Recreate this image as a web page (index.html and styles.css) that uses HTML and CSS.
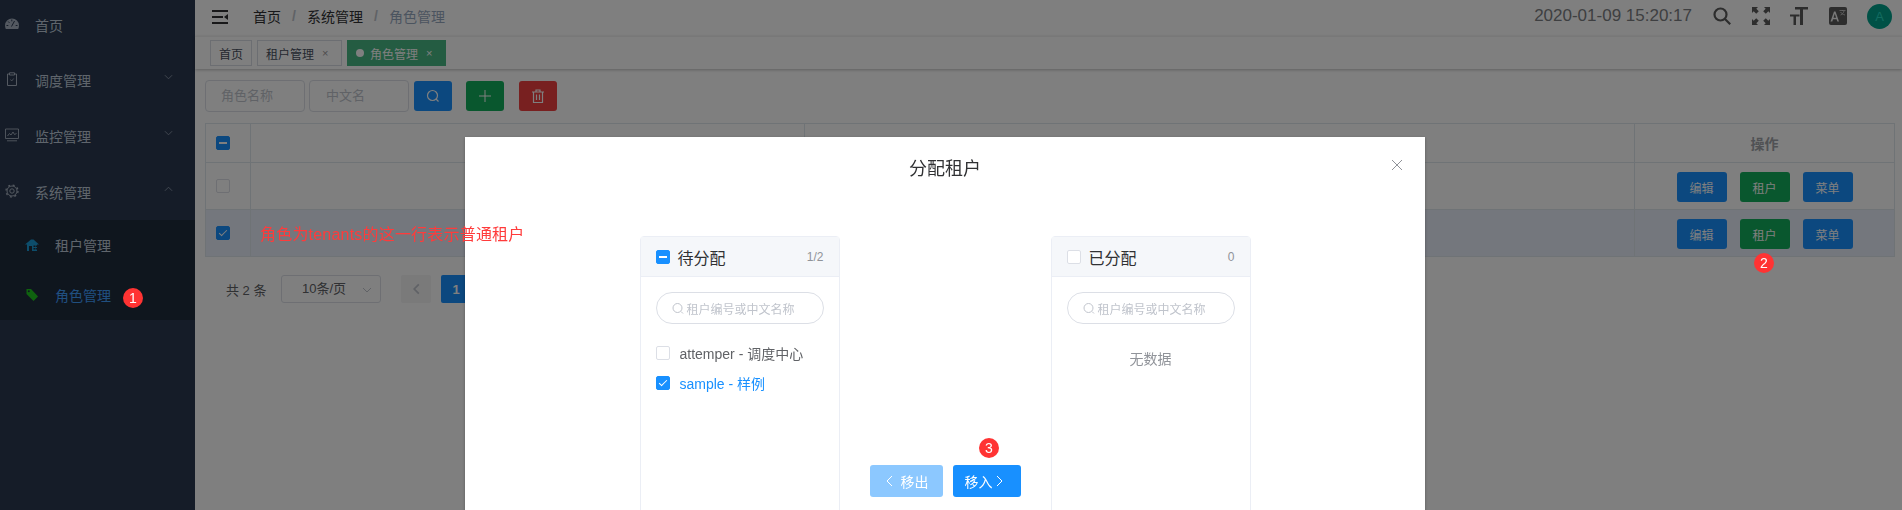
FILE: index.html
```html
<!DOCTYPE html>
<html lang="en">
<head>
  <meta charset="UTF-8">
  <title>角色管理</title>
  <link rel="stylesheet" href="styles.css">
</head>
<body>
  <div class="app">
    <!-- Sidebar -->
    <aside class="sidebar">
      <div class="menu-item">
        <svg class="menu-icon" viewBox="0 0 14 14"><path d="M7 1.500A7 7 0 0 0 0 8.500c0 1.300.3 2.400.8 3.500h12.400c.5-1.100.8-2.200.8-3.500a7 7 0 0 0-7-7z" fill="#a8b3c2"/><path d="M6.500 9.500 9.500 4M3.200 4.500l1.200 1.300M1.500 8.500h1.800M10.700 8.500h1.800M6.800 2.500v1.800" stroke="#2a3850" stroke-width="1" fill="none"/></svg>
        <span>首页</span>
      </div>
      <div class="menu-item">
        <svg class="menu-icon" viewBox="0 0 14 14" fill="none" stroke="#a8b3c2"><path d="M4.500 2h-2v11.500h9V2h-2"/><path d="M4.500 .8h5V3h-5z"/><path d="m5.500 7.500 1.200 1.500 2-2.500" stroke-width=".8"/></svg>
        <span>调度管理</span>
        <svg class="chevron" viewBox="0 0 10 6"><path d="m1 1 4 4 4-4"/></svg>
      </div>
      <div class="menu-item">
        <svg class="menu-icon" viewBox="0 0 14 14" fill="none" stroke="#a8b3c2" stroke-width=".9"><path d="M.5 1h13v9.500H.5zM2 12.800h10"/><path d="m2.500 8 2-2.500 1.500 1.500 2-3 1.500 2.500 2-1"/></svg>
        <span>监控管理</span>
        <svg class="chevron" viewBox="0 0 10 6"><path d="m1 1 4 4 4-4"/></svg>
      </div>
      <div class="menu-item">
        <svg class="menu-icon" viewBox="0 0 14 14" fill="none" stroke="#a8b3c2"><circle cx="7" cy="7" r="5"/><circle cx="7" cy="7" r="6" stroke-width="1.300" stroke-dasharray="2 2.710"/><circle cx="7" cy="7" r="2.200"/></svg>
        <span>系统管理</span>
        <svg class="chevron" viewBox="0 0 10 6"><path d="m1 5 4-4 4 4"/></svg>
      </div>
      <div class="submenu">
        <div class="submenu-item">
          <svg class="sub-icon" viewBox="0 0 14 14"><path d="M0 6.500 6 1.500h2.500l5.500 5H12v6.500H7V8H4v5H2V6.500z" fill="#1a9ad6"/><path d="M8.500 7.500h1.500v1.500H8.500zM10.500 7.500H12v1.500h-1.500zM8.500 10h1.500v1.500H8.500zM10.500 10H12v1.500h-1.500z" fill="#1f2d3d"/></svg>
          <span>租户管理</span>
        </div>
        <div class="submenu-item active">
          <svg class="sub-icon" viewBox="0 0 14 14"><path d="M1.500 1h4.500l7 7.500-4.500 4.500-7-7z" fill="#1fc71f"/><circle cx="3.800" cy="3.300" r="1" fill="#1f2d3d"/></svg>
          <span>角色管理</span>
        </div>
      </div>
    </aside>

    <section class="main">
      <!-- Top bar -->
      <header class="navbar">
        <svg class="hamburger" viewBox="0 0 16 14"><path d="M0 0h16v2H0zM0 6h11v2H0zM0 12h16v2H0z"/><path d="M16 4v6l-4-3z"/></svg>
        <div class="breadcrumb">
          <span>首页</span><i>/</i><span>系统管理</span><i>/</i><span class="current">角色管理</span>
        </div>
        <div class="navbar-right">
          <span class="clock">2020-01-09 15:20:17</span>
          <svg class="nav-icon" viewBox="0 0 18 18" fill="none" stroke="#5a5a5a" stroke-width="2.200"><circle cx="7.500" cy="7.500" r="6"/><path d="m12 12 5.200 5.200"/></svg>
          <svg class="nav-icon" viewBox="0 0 18 18" fill="#5a5a5a"><path d="M0 0h6L4.300 1.700l2.500 2.500-2.600 2.600-2.500-2.500L0 6zM18 0v6l-1.700-1.700-2.500 2.500-2.600-2.600 2.500-2.500L12 0zM0 18v-6l1.700 1.700 2.500-2.500 2.600 2.600-2.500 2.500L6 18zM18 18h-6l1.700-1.700-2.500-2.500 2.600-2.600 2.500 2.500L18 12z"/></svg>
          <svg class="nav-icon" viewBox="0 0 18 18" fill="#5a5a5a"><path d="M5 0h13v2.500h-5V18h-3V2.500H5zM0 7.500h9.500v2H6V18H3.500V9.500H0z"/></svg>
          <svg class="nav-icon" viewBox="0 0 18 18"><rect width="18" height="18" rx="2" fill="#5a5a5a"/><path d="M1.500 14.500 5 4.500h1.500l3.500 10H8.300l-.7-2.300H4l-.7 2.300zM4.500 10.800h2.600L5.800 6.700z" fill="#f0f0f0"/><path d="M10.500 3.500h6M13.500 3v1M11.500 8c2-.8 3-2 3.500-4M11.500 5c.8 1.400 2.500 2.500 4.500 3" stroke="#d0d0d0" stroke-width=".8" fill="none"/></svg>
          <span class="avatar">A</span>
        </div>
      </header>

      <!-- Tabs -->
      <nav class="tags">
        <span class="tag">首页</span>
        <span class="tag">租户管理<em>×</em></span>
        <span class="tag active"><b></b>角色管理<em>×</em></span>
      </nav>

      <main class="content">
        <div class="filter">
          <div class="fake-input">角色名称</div>
          <div class="fake-input">中文名</div>
          <button class="btn btn-icon blue">
            <svg viewBox="0 0 14 14" fill="none" stroke="currentColor" stroke-width="1.200"><circle cx="6.500" cy="6.500" r="5"/><path d="m10 10 2.500 2.500"/></svg>
          </button>
          <button class="btn btn-icon green">
            <svg viewBox="0 0 14 14" fill="none" stroke="currentColor" stroke-width="1"><path d="M7 1v12M1 7h12"/></svg>
          </button>
          <button class="btn btn-icon red">
            <svg viewBox="0 0 14 14" fill="none" stroke="currentColor" stroke-width="1.200"><path d="M1 3h12M5 3V1h4v2M2.500 3v10.500h9V3M5.500 5.500v5.500M8.500 5.500v5.500"/></svg>
          </button>
        </div>

        <div class="table">
          <div class="row head">
            <div class="cell cell-check"><span class="check indeterminate"></span></div>
            <div class="cell cell-a"></div>
            <div class="cell cell-b"></div>
            <div class="cell cell-ops">操作</div>
          </div>
          <div class="row body-row">
            <div class="cell cell-check"><span class="check"></span></div>
            <div class="cell cell-a"></div>
            <div class="cell cell-b"></div>
            <div class="cell cell-ops">
              <button class="btn btn-small blue">编辑</button>
              <button class="btn btn-small green">租户</button>
              <button class="btn btn-small blue">菜单</button>
            </div>
          </div>
          <div class="row body-row selected">
            <div class="cell cell-check"><span class="check checked"></span></div>
            <div class="cell cell-a"></div>
            <div class="cell cell-b"></div>
            <div class="cell cell-ops">
              <button class="btn btn-small blue">编辑</button>
              <button class="btn btn-small green">租户</button>
              <button class="btn btn-small blue">菜单</button>
            </div>
          </div>
        </div>

        <div class="pager">
          <span class="pager-total">共 2 条</span>
          <div class="pager-size">10条/页
            <svg class="pager-arrow" viewBox="0 0 10 6"><path d="m1 1 4 4 4-4"/></svg>
          </div>
          <span class="pager-btn disabled">
            <svg viewBox="0 0 6 10"><path d="M5 1 1 5l4 4"/></svg>
          </span>
          <span class="pager-btn current">1</span>
        </div>
      </main>
    </section>
  </div>

  <!-- Dialog -->
  <div class="overlay">
    <div class="dialog">
      <div class="dialog-head">
        <h2>分配租户</h2>
        <svg class="dialog-close" viewBox="0 0 12 12"><path d="m1 1 10 10M11 1 1 11"/></svg>
      </div>
      <div class="transfer">
        <div class="panel">
          <div class="panel-head">
            <span class="check indeterminate"></span>
            <span class="panel-title">待分配</span>
            <span class="panel-count">1/2</span>
          </div>
          <div class="panel-body">
            <div class="panel-search">
              <svg viewBox="0 0 12 12"><circle cx="5.500" cy="5.500" r="4.500"/><path d="m9 9 2 2"/></svg>
              租户编号或中文名称
            </div>
            <div class="panel-item"><span class="check"></span>attemper - 调度中心</div>
            <div class="panel-item on"><span class="check checked"></span>sample - 样例</div>
          </div>
        </div>

        <div class="transfer-btns">
          <button class="move move-off">
            <svg viewBox="0 0 7 12"><path d="M6 1 1 6l5 5"/></svg>移出
          </button>
          <button class="move">移入
            <svg viewBox="0 0 7 12"><path d="m1 1 5 5-5 5"/></svg>
          </button>
        </div>

        <div class="panel">
          <div class="panel-head">
            <span class="check"></span>
            <span class="panel-title">已分配</span>
            <span class="panel-count">0</span>
          </div>
          <div class="panel-body">
            <div class="panel-search">
              <svg viewBox="0 0 12 12"><circle cx="5.500" cy="5.500" r="4.500"/><path d="m9 9 2 2"/></svg>
              租户编号或中文名称
            </div>
            <div class="panel-empty">无数据</div>
          </div>
        </div>
      </div>
    </div>
  </div>

  <!-- Annotations drawn over the screenshot -->
  <div class="note">角色为tenants的这一行表示普通租户</div>
  <span class="badge badge-1">1</span>
  <span class="badge badge-2">2</span>
  <span class="badge badge-3">3</span>
</body>
</html>
```

FILE: styles.css
```css
* {
  box-sizing: border-box;
}

html,
body {
  height: 510px;
  margin: 0;
  overflow: hidden;
}

body {
  font-family: "Liberation Sans", "Noto Sans CJK SC", sans-serif;
  font-size: 14px;
  color: #606266;
  background: #fff;
}

.app {
  display: flex;
  height: 510px;
}

/* Sidebar */
.sidebar {
  width: 195px;
  flex: none;
  background: #2a3850;
  color: #bfcbd9;
}

.menu-item {
  height: 56px;
  display: flex;
  align-items: center;
  padding: 0 22px 0 5px;
}

.menu-item:first-child {
  height: 52px;
  padding-bottom: 3px;
}

.menu-icon {
  width: 14px;
  height: 14px;
  margin-right: 16px;
  flex: none;
  margin-top: -2px;
}

.chevron {
  width: 9px;
  height: 6px;
  margin-left: auto;
  margin-top: -6px;
  fill: none;
  stroke: #8a96a8;
  stroke-width: 1;
}

.submenu {
  background: #1f2d3d;
  height: 100px;
}

.submenu-item {
  height: 50px;
  display: flex;
  align-items: center;
  padding-left: 25px;
}

.submenu-item.active {
  color: #409eff;
}

.sub-icon {
  width: 14px;
  height: 14px;
  margin-right: 16px;
  flex: none;
}

/* Top bar */
.main {
  flex: 1;
  min-width: 0;
}

.navbar {
  height: 36px;
  display: flex;
  align-items: center;
  padding: 0 0 4px 17px;
}

.hamburger {
  width: 16px;
  height: 14px;
  margin-top: 2px;
  fill: #303133;
}

.breadcrumb {
  margin-left: 25px;
  color: #303133;
  display: flex;
  align-items: center;
}

.breadcrumb i {
  font-style: normal;
  color: #c0c4cc;
  font-weight: bold;
  width: 26px;
  text-align: center;
}

.breadcrumb .current {
  color: #97a8be;
}

.navbar-right {
  margin-left: auto;
  display: flex;
  align-items: center;
  padding-right: 10px;
}

.clock {
  font-size: 17px;
  color: #7c7f83;
  margin-right: 21px;
}

.nav-icon {
  width: 18px;
  height: 18px;
  margin-right: 20.500px;
}

.avatar {
  width: 25px;
  height: 25px;
  border-radius: 50%;
  background: #00a28d;
  color: #25d8c0;
  font-size: 13px;
  display: flex;
  align-items: center;
  justify-content: center;
}

/* Tabs */
.tags {
  height: 33px;
  display: flex;
  align-items: flex-start;
  gap: 5px;
  padding: 3px 0 0 15px;
  box-shadow: 0 1px 3px rgba(0, 0, 0, 0.25);
  border-top: 1px solid #f0f0f0;
}

.tag {
  height: 26px;
  border: 1px solid #d8dce5;
  padding: 0 8px;
  font-size: 12px;
  color: #495060;
  display: flex;
  align-items: center;
}

.tag em {
  font-style: normal;
  color: #999;
  width: 6px;
  margin: 0 5px 0 8px;
  font-size: 11px;
  text-align: center;
}

.tag.active {
  background: #48b885;
  border-color: #48b885;
  color: #fff;
}

.tag.active em {
  color: #fff;
}

.tag b {
  width: 8px;
  height: 8px;
  border-radius: 50%;
  background: #fff;
  margin-right: 6px;
}

/* Filter row */
.content {
  padding: 11px 7px 0 10px;
}

.filter {
  display: flex;
  align-items: center;
  height: 32px;
}

.fake-input {
  width: 100px;
  height: 32px;
  border: 1px solid #dcdfe6;
  border-radius: 4px;
  margin-right: 4px;
  padding-left: 15px;
  font-size: 13px;
  line-height: 30px;
  color: #c0c4cc;
}

.fake-input:nth-child(2) {
  padding-left: 16px;
}

.btn {
  border: none;
  color: #fff;
  border-radius: 3px;
  padding: 0;
  font-family: inherit;
  display: inline-flex;
  align-items: center;
  justify-content: center;
}

.btn-icon {
  width: 38px;
  height: 30px;
  margin-right: 14px;
}

.btn-icon:nth-child(3) {
  margin-left: 1px;
}

.btn-icon.red {
  margin-left: 1px;
}

.btn-icon svg {
  width: 14px;
  height: 14px;
}

.blue {
  background: #1890ff;
}

.green {
  background: #13ae5c;
}

.red {
  background: #f04040;
}

/* Table */
.table {
  margin-top: 11px;
  border-top: 1px solid #dfe6ec;
  border-left: 1px solid #dfe6ec;
}

.row {
  display: flex;
  height: 47px;
  border-bottom: 1px solid #dfe6ec;
}

.row.head {
  height: 39px;
}

.row.selected {
  background: #e8eefa;
}

.cell {
  border-right: 1px solid #dfe6ec;
  display: flex;
  align-items: center;
  justify-content: center;
}

.cell-check {
  width: 45px;
  justify-content: flex-start;
  padding-left: 10px;
}

.cell-a {
  width: 554px;
}

.cell-b {
  width: 830px;
}

.cell-ops {
  flex: 1;
  gap: 13px;
}

.head .cell-ops {
  font-weight: bold;
  color: #a0a3a8;
}

.btn-small {
  width: 50px;
  height: 30px;
  margin-top: 2px;
  font-size: 12px;
}

.check {
  width: 14px;
  height: 14px;
  border: 1px solid #dcdfe6;
  border-radius: 2px;
  background: #fff;
  flex: none;
  position: relative;
  display: inline-block;
}

.check.indeterminate,
.check.checked {
  background: #1890ff;
  border-color: #1890ff;
}

.check.indeterminate::after {
  content: "";
  position: absolute;
  left: 2px;
  right: 2px;
  top: 5px;
  height: 2px;
  background: #fff;
}

.check.checked::after {
  content: "";
  position: absolute;
  left: 4px;
  top: 1px;
  width: 3px;
  height: 7px;
  border: 1px solid #fff;
  border-left: 0;
  border-top: 0;
  transform: rotate(45deg);
}

/* Pagination */
.pager {
  display: flex;
  align-items: center;
  margin-top: 18px;
  padding-left: 21px;
  font-size: 13px;
}

.pager-total {
  width: 55px;
}

.pager-size {
  width: 100px;
  height: 28px;
  border: 1px solid #dcdfe6;
  border-radius: 3px;
  padding-left: 20px;
  line-height: 26px;
  position: relative;
}

.pager-arrow {
  position: absolute;
  right: 8px;
  top: 11px;
  width: 10px;
  height: 6px;
  fill: none;
  stroke: #c0c4cc;
}

.pager-btn {
  width: 30px;
  height: 28px;
  border-radius: 2px;
  margin-left: 10px;
  display: flex;
  align-items: center;
  justify-content: center;
  font-weight: bold;
}

.pager-btn.disabled {
  background: #f4f4f5;
  margin-left: 20px;
}

.pager-btn svg {
  width: 7px;
  height: 12px;
  fill: none;
  stroke: #c0c4cc;
  stroke-width: 1.500;
}

.pager-btn.current {
  background: #1890ff;
  color: #fff;
}

/* Dialog */
.overlay {
  position: fixed;
  left: 0;
  top: 0;
  width: 100%;
  height: 100%;
  background: rgba(0, 0, 0, 0.5);
  overflow: hidden;
}

.dialog {
  width: 960px;
  height: 700px;
  margin: 137px 0 0 465px;
  background: #fff;
  box-shadow: 0 1px 3px rgba(0, 0, 0, 0.3);
}

.dialog-head {
  height: 99px;
  padding-top: 20px;
  text-align: center;
  position: relative;
}

.dialog-head h2 {
  margin: 0;
  font-size: 18px;
  font-weight: 400;
  line-height: 24px;
  color: #303133;
}

.dialog-close {
  position: absolute;
  right: 22px;
  top: 22px;
  width: 12px;
  height: 12px;
  fill: none;
  stroke: #909399;
}

.transfer {
  display: flex;
  justify-content: center;
  align-items: flex-start;
}

.panel {
  width: 200px;
  height: 490px;
  border: 1px solid #ebeef5;
  border-radius: 4px;
}

.panel-head {
  height: 40px;
  background: #f5f7fa;
  border-bottom: 1px solid #ebeef5;
  display: flex;
  align-items: center;
  padding: 0 15px 0 15px;
}

.panel-title {
  font-size: 16px;
  color: #303133;
  margin-left: 8px;
}

.panel-count {
  margin-left: auto;
  font-size: 12px;
  color: #909399;
}

.panel-body {
  padding: 15px;
}

.panel-search {
  height: 32px;
  width: 168px;
  border: 1px solid #dcdfe6;
  border-radius: 16px;
  display: flex;
  align-items: center;
  padding-left: 15px;
  font-size: 12px;
  color: #c0c4cc;
  margin-bottom: 14px;
}

.panel-search svg {
  width: 12px;
  height: 13px;
  margin-right: 3px;
  fill: none;
  stroke: #c0c4cc;
}

.panel-item {
  height: 30px;
  display: flex;
  align-items: center;
  gap: 10px;
  color: #606266;
}

.panel-item.on {
  color: #1890ff;
}

.panel-empty {
  margin-top: 24px;
  text-align: center;
  color: #909399;
}

.transfer-btns {
  width: 211px;
  height: 490px;
  display: flex;
  align-items: center;
  justify-content: center;
  gap: 10px;
}

.move {
  width: 68px;
  height: 32px;
  border: none;
  border-radius: 3px;
  background: #1890ff;
  color: #fff;
  font-family: inherit;
  font-size: 14px;
  padding: 0 0 0 12px;
  display: flex;
  align-items: center;
  gap: 3px;
}

.move-off {
  width: 73px;
  background: #8cc8ff;
  padding-left: 16px;
  gap: 8px;
}

.move svg {
  width: 7px;
  height: 12px;
  flex: none;
  fill: none;
  stroke: #fff;
  stroke-width: 1;
}

/* Annotations */
.note {
  position: absolute;
  left: 260px;
  top: 225px;
  font-size: 16px;
  line-height: 20px;
  letter-spacing: 0.2px;
  color: #ff3b3b;
}

.badge {
  position: absolute;
  width: 20px;
  height: 20px;
  border-radius: 50%;
  background: #ff3333;
  color: #fff;
  font-size: 14px;
  line-height: 20px;
  text-align: center;
}

.badge-1 {
  left: 123px;
  top: 288px;
}

.badge-2 {
  left: 1754px;
  top: 253px;
}

.badge-3 {
  left: 979px;
  top: 438px;
}
```
